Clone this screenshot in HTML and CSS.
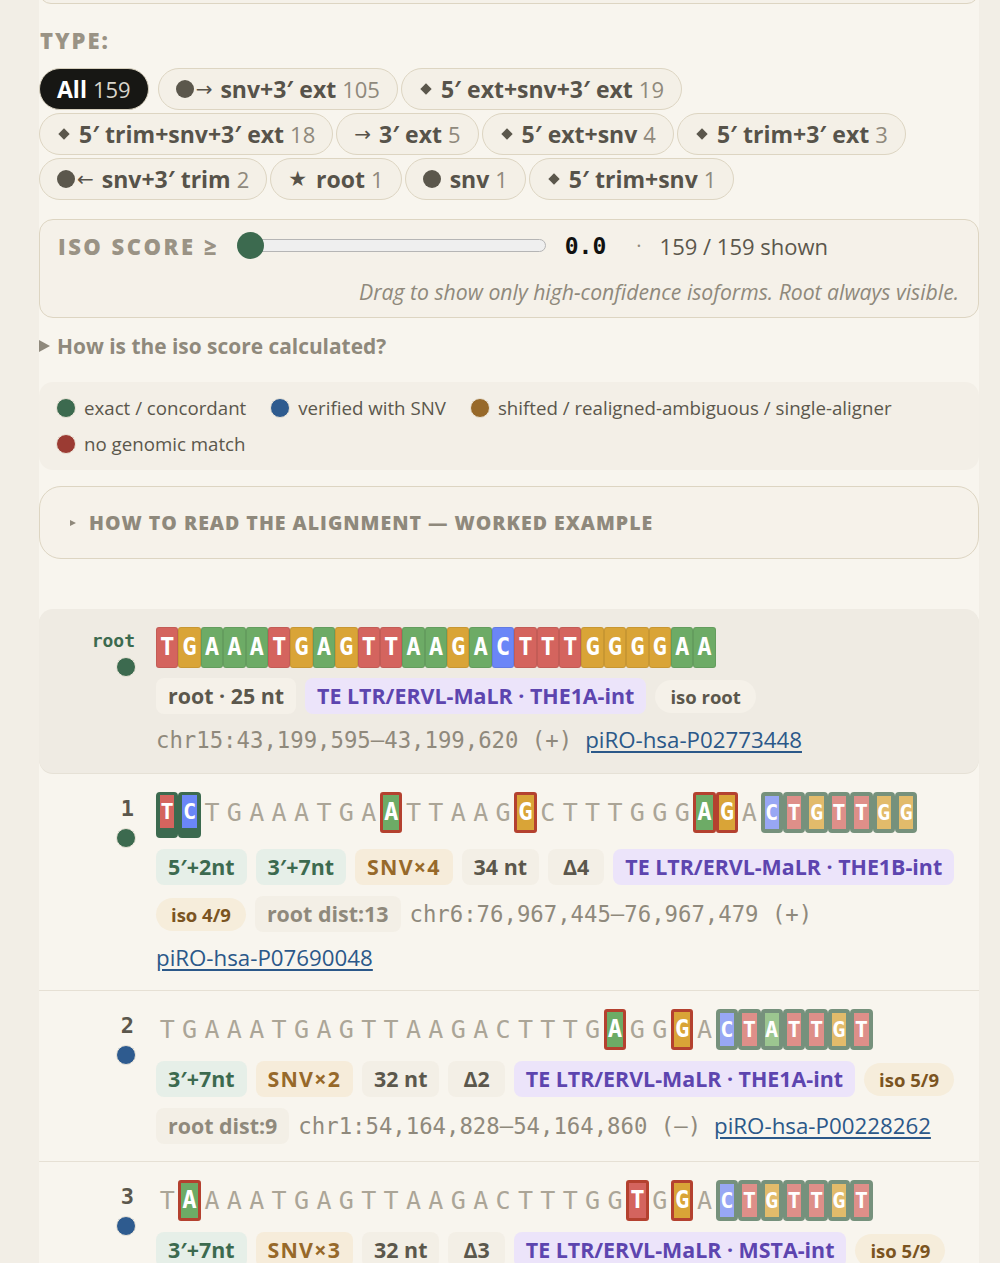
FILE: index.html
```html
<!DOCTYPE html>
<html lang="en">
<head>
<meta charset="utf-8">
<title>Isoforms</title>
<link rel="stylesheet" href="styles.css">
</head>
<body>
<div class="page">
  <div class="prev-box"></div>

  <div class="type-label">TYPE:</div>
  <div class="chip-rows">
    <div class="chip-row">
      <span class="tchip on">All<span class="cnt">159</span></span>
      <span class="tchip"><span class="ci"></span><span class="ar">→</span>snv+3′ ext<span class="cnt">105</span></span>
      <span class="tchip"><span class="di"></span>5′ ext+snv+3′ ext<span class="cnt">19</span></span>
    </div>
    <div class="chip-row">
      <span class="tchip"><span class="di"></span>5′ trim+snv+3′ ext<span class="cnt">18</span></span>
      <span class="tchip"><span class="ar solo">→</span>3′ ext<span class="cnt">5</span></span>
      <span class="tchip"><span class="di"></span>5′ ext+snv<span class="cnt">4</span></span>
      <span class="tchip"><span class="di"></span>5′ trim+3′ ext<span class="cnt">3</span></span>
    </div>
    <div class="chip-row">
      <span class="tchip"><span class="ci"></span><span class="ar">←</span>snv+3′ trim<span class="cnt">2</span></span>
      <span class="tchip"><span class="st">★</span>root<span class="cnt">1</span></span>
      <span class="tchip"><span class="ci solo"></span>snv<span class="cnt">1</span></span>
      <span class="tchip"><span class="di"></span>5′ trim+snv<span class="cnt">1</span></span>
    </div>
  </div>

  <div class="score-box">
    <div class="score-row">
      <span class="score-label">ISO SCORE ≥</span>
      <div class="slider"><div class="track"></div><div class="thumb"></div></div>
      <span class="score-val">0.0</span>
      <span class="sep">·</span>
      <span class="shown">159 / 159 shown</span>
    </div>
    <div class="hint">Drag to show only high-confidence isoforms. Root always visible.</div>
  </div>

  <div class="calc"><span class="tri"></span>How is the iso score calculated?</div>

  <div class="legend">
    <span class="li"><span class="ld green"></span>exact / concordant</span>
    <span class="li"><span class="ld blue"></span>verified with SNV</span>
    <span class="li"><span class="ld brown"></span>shifted / realigned-ambiguous / single-aligner</span>
    <span class="li"><span class="ld red"></span>no genomic match</span>
  </div>

  <div class="howto"><span class="tri-s"></span>HOW TO READ THE ALIGNMENT — WORKED EXAMPLE</div>

  <div class="list">
    <div class="iso root">
      <div class="lbl"><span class="rootname">root</span><span class="dot green"></span></div>
      <div class="body">
        <div class="seq"><i class="n T">T</i><i class="n G">G</i><i class="n A">A</i><i class="n A">A</i><i class="n A">A</i><i class="n T">T</i><i class="n G">G</i><i class="n A">A</i><i class="n G">G</i><i class="n T">T</i><i class="n T">T</i><i class="n A">A</i><i class="n A">A</i><i class="n G">G</i><i class="n A">A</i><i class="n C">C</i><i class="n T">T</i><i class="n T">T</i><i class="n T">T</i><i class="n G">G</i><i class="n G">G</i><i class="n G">G</i><i class="n G">G</i><i class="n A">A</i><i class="n A">A</i></div>
        <div class="meta">
          <span class="mc plain">root · 25 nt</span>
          <span class="mc te">TE LTR/ERVL-MaLR · THE1A-int</span>
          <span class="mc pill">iso root</span>
          <span class="coord">chr15:43,199,595–43,199,620 (+)</span>
          <a class="link" href="#">piRO-hsa-P02773448</a>
        </div>
      </div>
    </div>

    <div class="iso">
      <div class="lbl"><span class="num">1</span><span class="dot green"></span></div>
      <div class="body">
        <div class="seq"><i class="f T">T</i><i class="f C">C</i><i class="g">T</i><i class="g">G</i><i class="g">A</i><i class="g">A</i><i class="g">A</i><i class="g">T</i><i class="g">G</i><i class="g">A</i><i class="s A">A</i><i class="g">T</i><i class="g">T</i><i class="g">A</i><i class="g">A</i><i class="g">G</i><i class="s G">G</i><i class="g">C</i><i class="g">T</i><i class="g">T</i><i class="g">T</i><i class="g">G</i><i class="g">G</i><i class="g">G</i><i class="s A">A</i><i class="s G">G</i><i class="g">A</i><i class="x C">C</i><i class="x T">T</i><i class="x G">G</i><i class="x T">T</i><i class="x T">T</i><i class="x G">G</i><i class="x G">G</i></div>
        <div class="meta">
          <span class="mc ext">5′+2nt</span>
          <span class="mc ext">3′+7nt</span>
          <span class="mc snv">SNV×4</span>
          <span class="mc plain">34 nt</span>
          <span class="mc plain delta">Δ4</span>
          <span class="mc te">TE LTR/ERVL-MaLR · THE1B-int</span>
          <span class="mc pill score">iso 4/9</span>
          <span class="mc plain muted">root dist:13</span>
          <span class="coord">chr6:76,967,445–76,967,479 (+)</span>
          <a class="link" href="#">piRO-hsa-P07690048</a>
        </div>
      </div>
    </div>

    <div class="iso">
      <div class="lbl"><span class="num">2</span><span class="dot blue"></span></div>
      <div class="body">
        <div class="seq"><i class="g">T</i><i class="g">G</i><i class="g">A</i><i class="g">A</i><i class="g">A</i><i class="g">T</i><i class="g">G</i><i class="g">A</i><i class="g">G</i><i class="g">T</i><i class="g">T</i><i class="g">A</i><i class="g">A</i><i class="g">G</i><i class="g">A</i><i class="g">C</i><i class="g">T</i><i class="g">T</i><i class="g">T</i><i class="g">G</i><i class="s A">A</i><i class="g">G</i><i class="g">G</i><i class="s G">G</i><i class="g">A</i><i class="x C">C</i><i class="x T">T</i><i class="x A">A</i><i class="x T">T</i><i class="x T">T</i><i class="x G">G</i><i class="x T">T</i></div>
        <div class="meta">
          <span class="mc ext">3′+7nt</span>
          <span class="mc snv">SNV×2</span>
          <span class="mc plain">32 nt</span>
          <span class="mc plain delta">Δ2</span>
          <span class="mc te">TE LTR/ERVL-MaLR · THE1A-int</span>
          <span class="mc pill score">iso 5/9</span>
          <span class="mc plain muted">root dist:9</span>
          <span class="coord">chr1:54,164,828–54,164,860 (–)</span>
          <a class="link" href="#">piRO-hsa-P00228262</a>
        </div>
      </div>
    </div>

    <div class="iso">
      <div class="lbl"><span class="num">3</span><span class="dot blue"></span></div>
      <div class="body">
        <div class="seq"><i class="g">T</i><i class="s A">A</i><i class="g">A</i><i class="g">A</i><i class="g">A</i><i class="g">T</i><i class="g">G</i><i class="g">A</i><i class="g">G</i><i class="g">T</i><i class="g">T</i><i class="g">A</i><i class="g">A</i><i class="g">G</i><i class="g">A</i><i class="g">C</i><i class="g">T</i><i class="g">T</i><i class="g">T</i><i class="g">G</i><i class="g">G</i><i class="s T">T</i><i class="g">G</i><i class="s G">G</i><i class="g">A</i><i class="x C">C</i><i class="x T">T</i><i class="x G">G</i><i class="x T">T</i><i class="x T">T</i><i class="x G">G</i><i class="x T">T</i></div>
        <div class="meta">
          <span class="mc ext">3′+7nt</span>
          <span class="mc snv">SNV×3</span>
          <span class="mc plain">32 nt</span>
          <span class="mc plain delta">Δ3</span>
          <span class="mc te">TE LTR/ERVL-MaLR · MSTA-int</span>
          <span class="mc pill score">iso 5/9</span>
        </div>
      </div>
    </div>
  </div>
</div>
</body>
</html>
```

FILE: styles.css
```css
* { box-sizing: border-box; }

body {
  margin: 0;
  background: #f2eee6;
  font-family: "Open Sans", "Noto Sans", sans-serif;
  color: #5b574c;
}

.page {
  margin-left: 39px;
  width: 940px;
  min-height: 1400px;
  background: #f8f5ee;
  overflow: hidden;
}

.prev-box {
  height: 24px;
  margin-top: -20px;
  border: 1.5px solid #ddd5c2;
  border-radius: 14px;
  background: #f5f1e9;
}

/* ---------- type filter ---------- */
.type-label {
  margin-top: 23px;
  margin-left: 1px;
  font-size: 22px;
  line-height: 26px;
  font-weight: 800;
  letter-spacing: 2px;
  color: #9a9385;
}

.chip-rows {
  margin-top: 15px;
  display: flex;
  flex-direction: column;
  gap: 3px;
}

.chip-row {
  display: flex;
  gap: 3px;
}

.tchip {
  height: 42px;
  padding: 0 17px;
  border: 1.5px solid #ddd5c2;
  border-radius: 21px;
  background: #f4f0e7;
  display: inline-flex;
  align-items: center;
  font-size: 23px;
  font-weight: 700;
  color: #57534a;
  white-space: nowrap;
}

.tchip .cnt {
  font-weight: 400;
  font-size: 22px;
  color: #8f897c;
  margin-left: 6px;
}

.tchip.on {
  background: #171714;
  border-color: #d6cfbd;
  color: #fff;
  margin-right: 6px;
}

.tchip.on .cnt { color: #d9d5cc; }

.ci {
  width: 18px;
  height: 18px;
  border-radius: 50%;
  background: #5b574c;
  flex: none;
}

.ci.solo { margin-right: 9px; }

.ar {
  font-family: "DejaVu Sans", sans-serif;
  font-weight: 400;
  font-size: 20px;
  margin: 0 8px 0 2px;
}

.ar.solo { margin-left: 0; }

.di {
  width: 8px;
  height: 8px;
  background: #5b574c;
  transform: rotate(45deg);
  margin: 0 11px 0 3px;
  flex: none;
}

.st {
  font-family: "DejaVu Sans", sans-serif;
  font-size: 21px;
  margin-right: 9px;
}

/* ---------- score box ---------- */
.score-box {
  margin-top: 19px;
  border: 1.5px solid #ddd5c2;
  border-radius: 14px;
  background: #f5f1e9;
  padding: 12px 18px 12px 18px;
}

.score-row {
  display: flex;
  align-items: center;
  height: 27px;
}

.score-label {
  font-size: 22px;
  font-weight: 800;
  letter-spacing: 2.5px;
  color: #9a9385;
  margin-right: 18px;
}

.slider {
  position: relative;
  width: 309px;
  height: 27px;
}

.track {
  position: absolute;
  left: 12px;
  right: 0;
  top: 7px;
  height: 13px;
  border-radius: 7px;
  background: #efefef;
  border: 1px solid #b5b5b5;
}

.thumb {
  position: absolute;
  left: 0;
  top: 0;
  width: 27px;
  height: 27px;
  border-radius: 50%;
  background: #3c6a4f;
}

.score-val {
  margin-left: 19px;
  font-family: "DejaVu Sans Mono", monospace;
  font-weight: 700;
  font-size: 23px;
  color: #111;
}

.sep {
  margin-left: 30px;
  color: #8f897c;
  font-size: 20px;
}

.shown {
  margin-left: 18px;
  font-size: 22px;
  color: #5b574c;
}

.hint {
  margin-top: 20px;
  text-align: right;
  font-style: italic;
  font-size: 21.2px;
  line-height: 26px;
  color: #8f897c;
  padding-right: 1px;
}

/* ---------- calc ---------- */
.calc {
  margin-top: 15px;
  display: flex;
  align-items: center;
  font-size: 20.9px;
  line-height: 26px;
  font-weight: 700;
  color: #8f897c;
}

.tri {
  width: 0;
  height: 0;
  border-left: 11px solid #8f897c;
  border-top: 6px solid transparent;
  border-bottom: 6px solid transparent;
  margin-right: 7px;
}

/* ---------- legend ---------- */
.legend {
  margin-top: 23px;
  background: #f3efe7;
  border-radius: 14px;
  padding: 13px 17px;
  display: flex;
  flex-wrap: wrap;
  column-gap: 24px;
  row-gap: 10px;
}

.li {
  display: inline-flex;
  align-items: center;
  font-size: 18.7px;
  line-height: 26px;
  color: #5b574c;
}

.ld {
  width: 20px;
  height: 20px;
  border-radius: 50%;
  border: 1.5px solid #ebe5d9;
  margin-right: 8px;
}

.green { background: #3c6a4f; }
.blue { background: #2e5b8f; }
.brown { background: #97692a; }
.red { background: #9b3b33; }

/* ---------- how to ---------- */
.howto {
  margin-top: 16px;
  height: 73px;
  border: 1.5px solid #ddd5c2;
  border-radius: 22px;
  background: #f6f2ea;
  display: flex;
  align-items: center;
  padding-left: 30px;
  font-size: 19.5px;
  font-weight: 800;
  letter-spacing: 1px;
  color: #8f897c;
}

.tri-s {
  width: 0;
  height: 0;
  border-left: 6px solid #8f897c;
  border-top: 3.5px solid transparent;
  border-bottom: 3.5px solid transparent;
  margin-right: 13px;
}

/* ---------- isoform list ---------- */
.list {
  margin-top: 50px;
}

.iso {
  display: grid;
  grid-template-columns: 97px 1fr;
  column-gap: 20px;
  padding: 18px 16px 17px 0;
  border-bottom: 1px solid #e6e0d4;
}

.iso.root {
  background: #efebe3;
  border-radius: 14px;
  border-bottom: none;
  box-shadow: 0 1px 0 #e6e1d6;
  padding-bottom: 18px;
  margin-bottom: 1px;
}

.lbl {
  display: flex;
  flex-direction: column;
  align-items: flex-end;
}

.rootname {
  font-family: "DejaVu Sans Mono", monospace;
  font-weight: 700;
  font-size: 18px;
  line-height: 22px;
  color: #3c6a4f;
  margin-top: 3px;
  margin-right: 1px;
}

.num {
  font-family: "DejaVu Sans Mono", monospace;
  font-weight: 700;
  font-size: 22px;
  line-height: 26px;
  margin-top: 4px;
  margin-right: 2px;
  color: #5b574c;
}

.dot {
  width: 20px;
  height: 20px;
  border-radius: 50%;
  border: 1.5px solid #ebe5d9;
  margin-top: 6px;
}

.root .dot { margin-top: 5px; }

.seq {
  display: flex;
  align-items: flex-start;
}

.seq i {
  font-style: normal;
  width: 22.4px;
  height: 41px;
  flex: none;
  text-align: center;
  font-family: "DejaVu Sans Mono", monospace;
  font-size: 24px;
  line-height: 41px;
}

.seq .g {
  color: #aba597;
  font-size: 25px;
}

.seq .n,
.seq .s,
.seq .x,
.seq .f {
  color: #fff;
  font-weight: 700;
}

.seq .n {
  border: 1px solid rgba(0, 0, 0, 0.08);
  border-radius: 3px;
  line-height: 39px;
}

.seq .s {
  border: 3px solid #b4412f;
  border-radius: 3px;
  line-height: 35px;
}

.seq .x {
  border: 4px solid #76917c;
  border-radius: 4px;
  line-height: 33px;
  font-size: 22px;
}

.seq .f {
  height: 46px;
  border-style: solid;
  border-color: #3c6a4f;
  border-width: 3px 4px 10px 4px;
  border-radius: 4px;
  line-height: 33px;
  font-size: 22px;
}

.seq .n.T, .seq .s.T, .seq .f.T { background: #d4645e; }
.seq .n.G, .seq .s.G, .seq .f.G { background: #d9a437; }
.seq .n.A, .seq .s.A, .seq .f.A { background: #6dab66; }
.seq .n.C, .seq .s.C, .seq .f.C { background: #6b86f7; }

.seq .x.T { background: #de8f89; }
.seq .x.G { background: #e2bb6b; }
.seq .x.A { background: #9cc690; }
.seq .x.C { background: #98a7f4; }

.meta {
  margin-top: 11px;
  display: flex;
  flex-wrap: wrap;
  align-items: center;
  column-gap: 9px;
  row-gap: 11px;
}

.root .meta { margin-top: 10px; }

.mc {
  height: 36px;
  line-height: 36px;
  padding: 0 12px;
  border-radius: 8px;
  font-size: 21.4px;
  font-weight: 700;
  white-space: nowrap;
}

.mc.plain { background: #f3efe6; color: #5b574c; }
.root .mc.plain { background: #f5f1e9; }
.mc.plain.muted { color: #8f897c; }
.mc.plain.delta { padding: 0 15px; }
.mc.ext { background: #e6efe8; color: #3c6a4f; }
.mc.snv { background: #f6ecda; color: #97692a; letter-spacing: 1.2px; }
.mc.te { background: #ece4fa; color: #5d45af; }

.mc.pill {
  height: 33px;
  line-height: 33px;
  border-radius: 17px;
  padding: 0 15px;
  font-size: 18.5px;
  background: #f5f1e9;
  color: #5b574c;
}

.mc.pill.score {
  background: #f6eddb;
  color: #7b5421;
}

.coord {
  font-family: "DejaVu Sans Mono", monospace;
  font-size: 22.3px;
  line-height: 30px;
  color: #8f897c;
  margin: 0 4px 0 0;
  white-space: nowrap;
}

.link {
  font-size: 22.3px;
  line-height: 30px;
  color: #2b5889;
  text-decoration: underline;
  text-underline-offset: 3px;
  text-decoration-thickness: 1.5px;
}
```
